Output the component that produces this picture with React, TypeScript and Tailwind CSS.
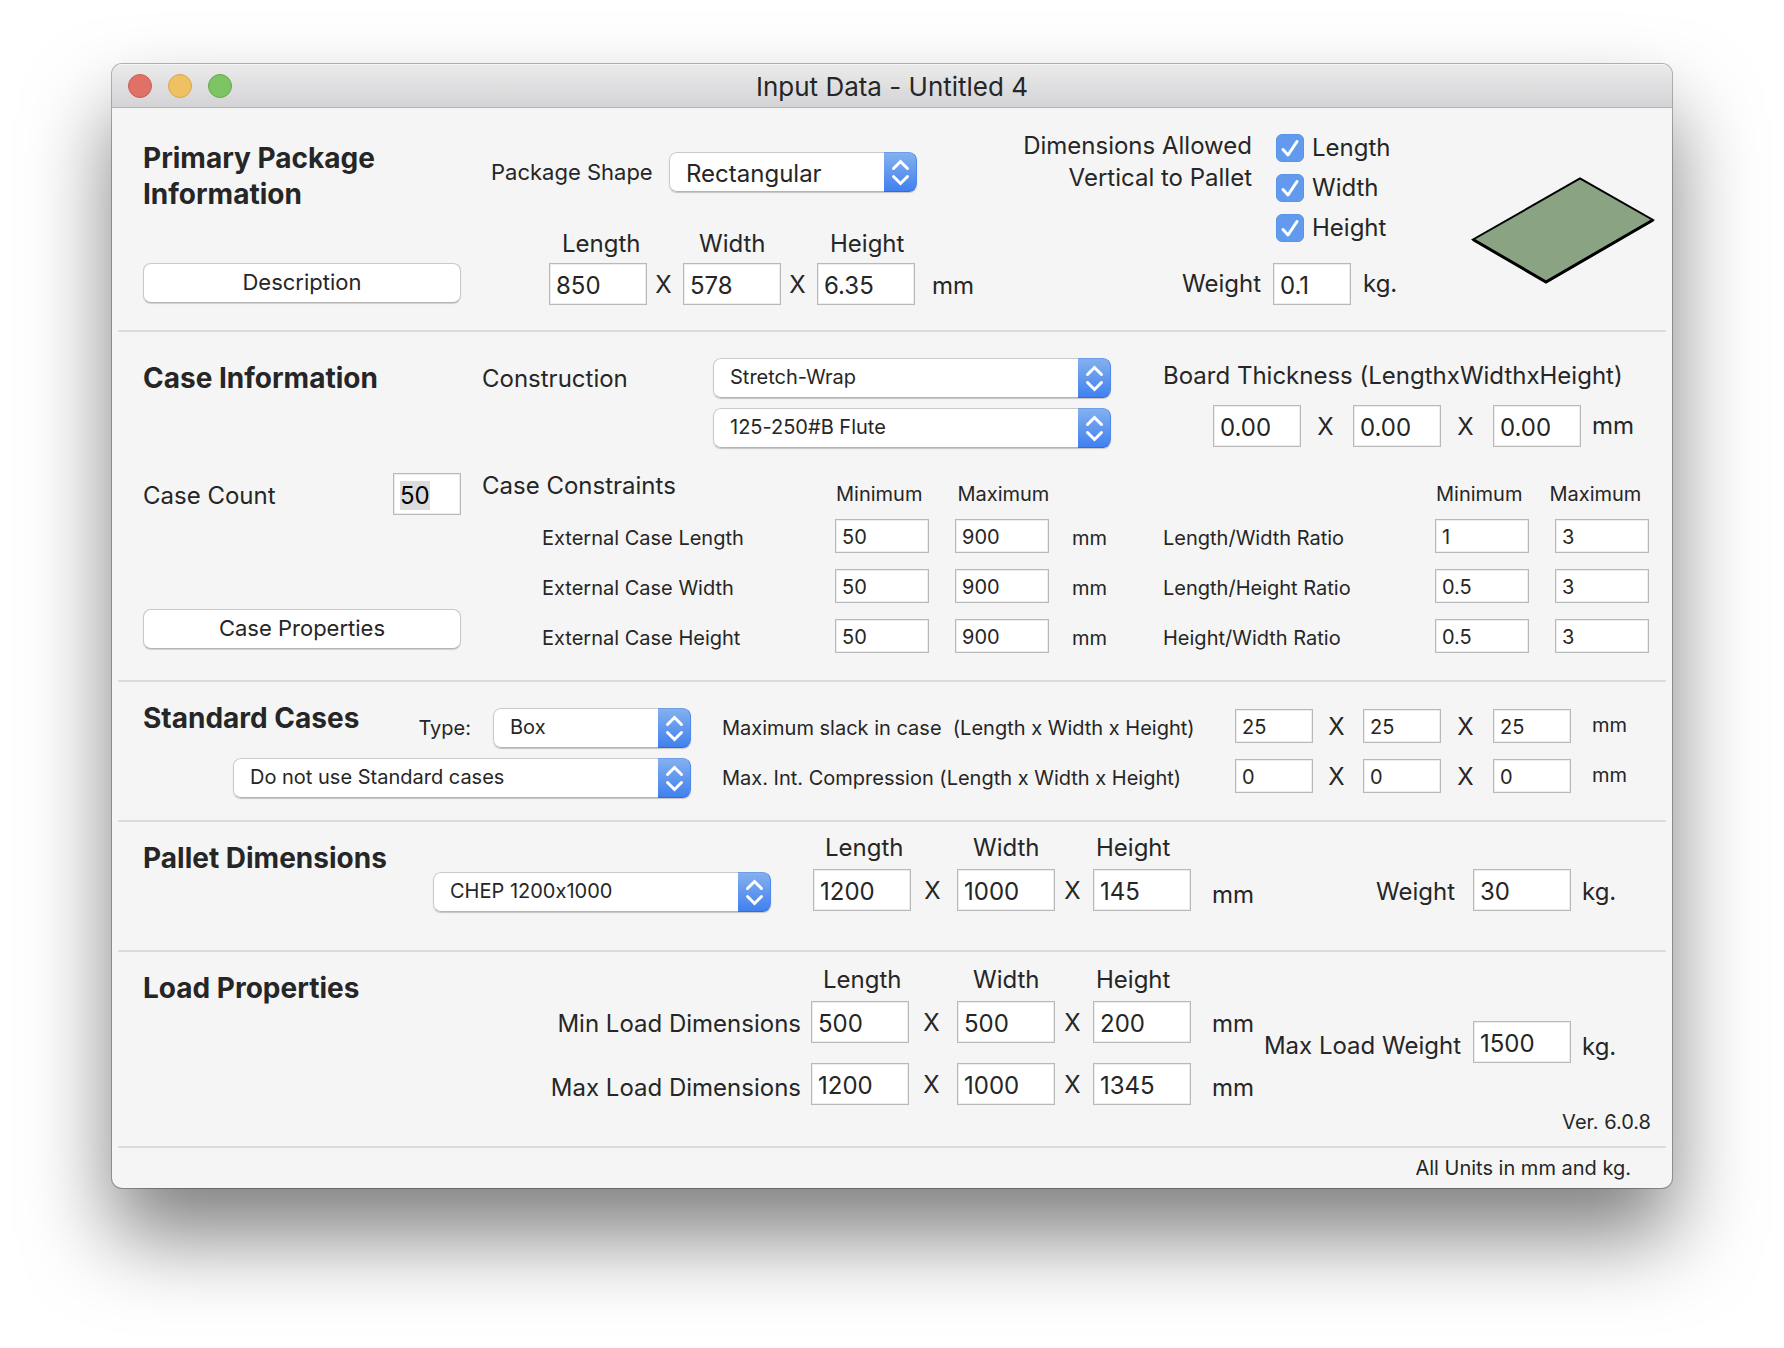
import { useEffect, useRef } from "react";
import type { ReactNode } from "react";

const LARGE = "text-2xl leading-8";
const MEDIUM = "text-[22px] leading-8";
const SMALL = "text-xl leading-7";

type FieldProps = { label: string; value: string; small?: boolean; className: string };

function Field({ label, value, small, className }: FieldProps) {
  return (
    <input
      type="text"
      aria-label={label}
      defaultValue={value}
      className={`block rounded-none border border-[#b9b9b9] bg-white pl-[6px] shadow-[inset_0_0_0_1px_#ececec] outline-none ${
        small ? "h-[34px] pt-px text-xl" : "h-[42px] pt-[2px] text-2xl"
      } ${className}`}
    />
  );
}

type PopupProps = { id: string; label?: string; options: string[]; large?: boolean; className: string };

function Popup({ id, label, options, large, className }: PopupProps) {
  return (
    <div className={`relative h-10 overflow-hidden rounded-lg shadow-[0_1px_1px_#c4c4c4] ${className}`}>
      <select
        id={id}
        aria-label={label}
        className={`h-full w-full appearance-none rounded-lg border border-[#c9c9c9] border-b-[#b4b4b4] bg-white pl-4 outline-none ${
          large ? "pt-[3px] text-2xl" : "pb-[2px] text-xl"
        }`}
      >
        {options.map((o) => (
          <option key={o}>{o}</option>
        ))}
      </select>
      <span className="pointer-events-none absolute inset-y-0 right-0 w-[33px] rounded-r-lg border border-l-0 border-t-[#6d9fe8] border-r-[#4f87ea] border-b-[#2f6be6] bg-linear-to-b from-[#83b0ee] to-[#4180ee]">
        <svg viewBox="0 0 32 38" className="h-full w-full" fill="none" stroke="white" strokeWidth="3">
          <path d="M9.5 15.5 L16.5 8.5 L23.5 15.5" strokeLinecap="round" />
          <path d="M9.5 23.5 L16.5 30.5 L23.5 23.5" strokeLinecap="round" />
        </svg>
      </span>
    </div>
  );
}

function PushButton({ children }: { children: ReactNode }) {
  return (
    <button
      type="button"
      className="h-10 w-full rounded-lg border border-[#c9c9c9] border-b-[#b4b4b4] bg-white pb-[2px] text-[22px] leading-8 shadow-[0_1px_1px_#d0d0d0]"
    >
      {children}
    </button>
  );
}

function Heading({ children }: { children: ReactNode }) {
  return <h2 className="text-[28px] leading-9 font-bold whitespace-nowrap">{children}</h2>;
}

function Times() {
  return <span className="pt-[2px] pr-[3px] text-center text-2xl leading-8">X</span>;
}

function Section({ children, className }: { children: ReactNode; className: string }) {
  return (
    <section className={`mx-[6px] flex items-start border-b-2 border-[#dcdcdc] pl-[25px] ${className}`}>{children}</section>
  );
}

function Check({ label }: { label: string }) {
  return (
    <label className={`flex h-7 items-center gap-2 ${LARGE}`}>
      <span className="grid size-7 place-items-center">
        <input
          type="checkbox"
          defaultChecked
          className="peer col-start-1 row-start-1 size-7 appearance-none rounded-md border border-[#bbbbbb] bg-white checked:border-[#5a94ea] checked:bg-[#629bed]"
        />
        <svg
          viewBox="0 0 28 28"
          className="pointer-events-none invisible col-start-1 row-start-1 size-7 peer-checked:visible"
          fill="none"
          stroke="white"
          strokeWidth="3"
          strokeLinecap="round"
          strokeLinejoin="round"
        >
          <path d="M7 15.5 L12 21 L21 7.5" />
        </svg>
      </span>
      {label}
    </label>
  );
}

type LimitsProps = { rows: [string, string, string][]; unit?: string; className: string };

function Limits({ rows, unit, className }: LimitsProps) {
  return (
    <div className={`mt-[11px] grid items-center gap-y-4 ${SMALL} ${className}`}>
      {rows.map(([name, min, max]) => (
        <div key={name} className="contents">
          <span className="pt-1 whitespace-nowrap">{name}</span>
          <Field small label={`${name} minimum`} value={min} className="w-full" />
          <span />
          <Field small label={`${name} maximum`} value={max} className="w-full" />
          {unit && <span className="pt-1 pl-[23px]">{unit}</span>}
        </div>
      ))}
    </div>
  );
}

function AxisNames() {
  return (
    <>
      <span className="pl-3">Length</span>
      <span />
      <span className="pl-4">Width</span>
      <span />
      <span className="pl-[3px]">Height</span>
      <span />
    </>
  );
}

function Dimensions({ name, values }: { name: string; values: [string, string, string] }) {
  return (
    <>
      <Field label={`${name} length`} value={values[0]} className="w-full" />
      <Times />
      <Field label={`${name} width`} value={values[1]} className="w-full" />
      <Times />
      <Field label={`${name} height`} value={values[2]} className="w-full" />
    </>
  );
}

function SmallDimensions({ name, text, value }: { name: string; text: string; value: string }) {
  return (
    <>
      <span className="pt-1 whitespace-pre">{text}</span>
      <Field small label={`${name} length`} value={value} className="w-full" />
      <Times />
      <Field small label={`${name} width`} value={value} className="w-full" />
      <Times />
      <Field small label={`${name} height`} value={value} className="w-full" />
      <span className="pb-[3px] pl-[21px]">mm</span>
    </>
  );
}

export default function App() {
  const count = useRef<HTMLInputElement>(null);

  useEffect(() => {
    count.current?.focus({ preventScroll: true });
    count.current?.select();
  }, []);

  return (
    <div className="min-h-screen bg-white px-28 py-16 font-['Inter','Liberation_Sans',sans-serif] text-[#262626] [font-feature-settings:'calt'_0]">
      <main className="min-w-[1560px] overflow-hidden rounded-[10px] bg-[#f5f5f5] shadow-[0_0_0_1px_rgba(0,0,0,0.28),0_48px_84px_rgba(0,0,0,0.5)]">
        <header className="grid h-11 grid-cols-[1fr_auto_1fr] items-center border-b border-[#b4b4b4] bg-linear-to-b from-[#ebebec] to-[#d4d4d6] px-4 shadow-[inset_0_1px_0_#f6f6f6]">
          <div className="flex gap-4">
            <button type="button" aria-label="Close" className="size-6 rounded-full border border-[#cf5b50] bg-[#df7166]" />
            <button type="button" aria-label="Minimize" className="size-6 rounded-full border border-[#d9a548] bg-[#efc163]" />
            <button type="button" aria-label="Zoom" className="size-6 rounded-full border border-[#66a750] bg-[#7dc564]" />
          </div>
          <h1 className="pt-[2px] text-[26px] leading-8">Input Data - Untitled 4</h1>
        </header>

        <Section className="pb-[25px]">
          <div className="w-[318px] shrink-0 pt-8">
            <Heading>
              Primary Package
              <br />
              Information
            </Heading>
            <div className="mt-[51px]">
              <PushButton>Description</PushButton>
            </div>
          </div>

          <div className="ml-[30px] pt-11">
            <div className="flex items-center">
              <label htmlFor="shape" className={`w-[178px] ${MEDIUM}`}>
                Package Shape
              </label>
              <Popup id="shape" large options={["Rectangular", "Cylindrical", "Oval"]} className="w-[248px]" />
            </div>
            <div className={`mt-9 ml-[58px] grid grid-cols-[98px_36px_98px_36px_98px_auto] items-center gap-y-[3px] ${LARGE}`}>
              <span className="pl-[13px]">Length</span>
              <span />
              <span className="pl-4">Width</span>
              <span />
              <span className="pl-[13px]">Height</span>
              <span />
              <Dimensions name="Package" values={["850", "578", "6.35"]} />
              <span className="pt-[3px] pl-[17px]">mm</span>
            </div>
          </div>

          <div className={`ml-auto pt-[22px] ${LARGE}`}>
            <div className="flex items-start justify-end">
              <p className="text-right whitespace-nowrap">
                Dimensions Allowed
                <br />
                Vertical to Pallet
              </p>
              <div className="mt-1 ml-6 flex w-[119px] flex-col gap-3">
                <Check label="Length" />
                <Check label="Width" />
                <Check label="Height" />
              </div>
            </div>
            <div className="mt-[21px] flex items-center justify-end gap-3">
              <span>Weight</span>
              <Field label="Package weight in kg" value="0.1" className="w-[78px]" />
              <span className="w-8">kg.</span>
            </div>
          </div>

          <svg viewBox="0 0 186 110" className="mt-[67px] mr-[10px] ml-[75px] h-[110px] w-[186px] shrink-0" role="img" aria-label="Package preview">
            <path d="M3 64.5 L110 3.5 L183 45 L76 107 Z" fill="#8aa382" stroke="black" strokeWidth="2" />
            <path d="M3 64.5 L76 107 L183 45" fill="none" stroke="black" strokeWidth="3" />
          </svg>
        </Section>

        <Section className="pr-[17px] pb-[27px]">
          <div className="w-[318px] shrink-0 pt-7">
            <Heading>Case Information</Heading>
            <div className={`mt-[77px] flex items-center justify-between ${LARGE}`}>
              <label htmlFor="case-count" className="pt-[3px]">
                Case Count
              </label>
              <input
                id="case-count"
                ref={count}
                type="text"
                defaultValue="50"
                className="h-[42px] w-[68px] rounded-none border border-[#b9b9b9] bg-white pt-[2px] pl-[6px] leading-8 text-black shadow-[inset_0_0_0_1px_#ececec] outline-none selection:bg-[#dcdcdc] selection:text-black"
              />
            </div>
            <div className="mt-[94px]">
              <PushButton>Case Properties</PushButton>
            </div>
          </div>

          <div className="ml-[21px] pt-[26px]">
            <div className="flex items-start">
              <label htmlFor="construction" className={`mt-[5px] w-[231px] ${LARGE}`}>
                Construction
              </label>
              <div className="flex w-[398px] flex-col gap-[10px]">
                <Popup id="construction" options={["Stretch-Wrap", "RSC", "Tray"]} className="w-full" />
                <Popup id="board" label="Board grade" options={["125-250#B Flute", "200#C Flute"]} className="w-full" />
              </div>
            </div>
            <div className="mt-[22px] flex h-[38px] justify-between">
              <h3 className={`w-[354px] ${LARGE}`}>Case Constraints</h3>
              <div className={`flex flex-1 gap-[35px] self-end ${SMALL}`}>
                <span>Minimum</span>
                <span>Maximum</span>
              </div>
            </div>
            <Limits
              unit="mm"
              className="grid-cols-[293px_94px_26px_94px_auto] pl-[60px]"
              rows={[
                ["External Case Length", "50", "900"],
                ["External Case Width", "50", "900"],
                ["External Case Height", "50", "900"],
              ]}
            />
          </div>

          <div className="ml-auto w-[486px] pt-7">
            <h3 className={LARGE}>Board Thickness (LengthxWidthxHeight)</h3>
            <div className={`mt-[13px] ml-[50px] grid grid-cols-[88px_52px_88px_52px_88px_auto] items-center ${LARGE}`}>
              <Dimensions name="Board thickness" values={["0.00", "0.00", "0.00"]} />
              <span className="pl-[11px]">mm</span>
            </div>
            <div className={`mt-[33px] ml-[273px] flex gap-[27px] ${SMALL}`}>
              <span>Minimum</span>
              <span>Maximum</span>
            </div>
            <Limits
              className="grid-cols-[272px_94px_26px_94px]"
              rows={[
                ["Length/Width Ratio", "1", "3"],
                ["Length/Height Ratio", "0.5", "3"],
                ["Height/Width Ratio", "0.5", "3"],
              ]}
            />
          </div>
        </Section>

        <Section className="pb-[22px]">
          <div className="w-[548px] shrink-0 pt-[18px]">
            <div className="flex items-start justify-between">
              <Heading>Standard Cases</Heading>
              <div className={`mt-2 flex items-center gap-[22px] ${SMALL}`}>
                <label htmlFor="type">Type:</label>
                <Popup id="type" options={["Box", "Tray"]} className="w-[198px]" />
              </div>
            </div>
            <Popup
              id="standard"
              label="Standard case"
              options={["Do not use Standard cases", "Use Standard cases"]}
              className="mt-[10px] ml-auto w-[458px]"
            />
          </div>
          <div
            className={`ml-[31px] grid flex-1 grid-cols-[minmax(513px,1fr)_78px_50px_78px_52px_78px_95px] items-center gap-y-4 pt-[27px] ${SMALL}`}
          >
            <SmallDimensions name="Slack" text="Maximum slack in case  (Length x Width x Height)" value="25" />
            <SmallDimensions name="Compression" text="Max. Int. Compression (Length x Width x Height)" value="0" />
          </div>
        </Section>

        <Section className="pb-[38px]">
          <div className="w-[290px] shrink-0 pt-[18px]">
            <Heading>Pallet Dimensions</Heading>
          </div>
          <Popup id="pallet" label="Pallet type" options={["CHEP 1200x1000", "GMA 48x40"]} className="mt-[50px] w-[338px]" />
          <div className={`mt-[10px] ml-[42px] grid grid-cols-[98px_46px_98px_38px_98px_auto] items-center gap-y-[5px] ${LARGE}`}>
            <AxisNames />
            <Dimensions name="Pallet" values={["1200", "1000", "145"]} />
            <span className="pt-[10px] pl-[21px]">mm</span>
          </div>
          <div className={`mt-[47px] ml-auto flex items-center ${LARGE}`}>
            <span className="pt-[3px]">Weight</span>
            <Field label="Pallet weight in kg" value="30" className="ml-[18px] w-[98px]" />
            <span className="w-[95px] pt-[3px] pl-[11px]">kg.</span>
          </div>
        </Section>

        <Section className="pb-[10px]">
          <div className="w-[290px] shrink-0 pt-[18px]">
            <Heading>Load Properties</Heading>
          </div>
          <div className={`mt-3 grid grid-cols-[378px_98px_48px_98px_38px_98px_auto] items-center ${LARGE}`}>
            <span />
            <AxisNames />
            <span className="mt-2 pr-[10px] text-right">Min Load Dimensions</span>
            <div className="col-span-5 mt-[5px] grid grid-cols-subgrid items-center">
              <Dimensions name="Min load" values={["500", "500", "200"]} />
            </div>
            <span className="mt-2 pl-[21px]">mm</span>
            <span className="mt-7 pr-[10px] text-right">Max Load Dimensions</span>
            <div className="col-span-5 mt-5 grid grid-cols-subgrid items-center">
              <Dimensions name="Max load" values={["1200", "1000", "1345"]} />
            </div>
            <span className="mt-7 pl-[21px]">mm</span>
          </div>
          <div className="ml-auto pt-[69px]">
            <div className={`flex items-center ${LARGE}`}>
              <span className="pt-2 whitespace-nowrap">Max Load Weight</span>
              <Field label="Max load weight in kg" value="1500" className="ml-3 w-[98px]" />
              <span className="w-[95px] pt-[10px] pl-[11px]">kg.</span>
            </div>
            <p className={`mt-[45px] pr-[15px] text-right ${SMALL}`}>Ver. 6.0.8</p>
          </div>
        </Section>

        <footer className={`flex h-10 items-center justify-end pr-[41px] ${SMALL}`}>All Units in mm and kg.</footer>
      </main>
    </div>
  );
}
